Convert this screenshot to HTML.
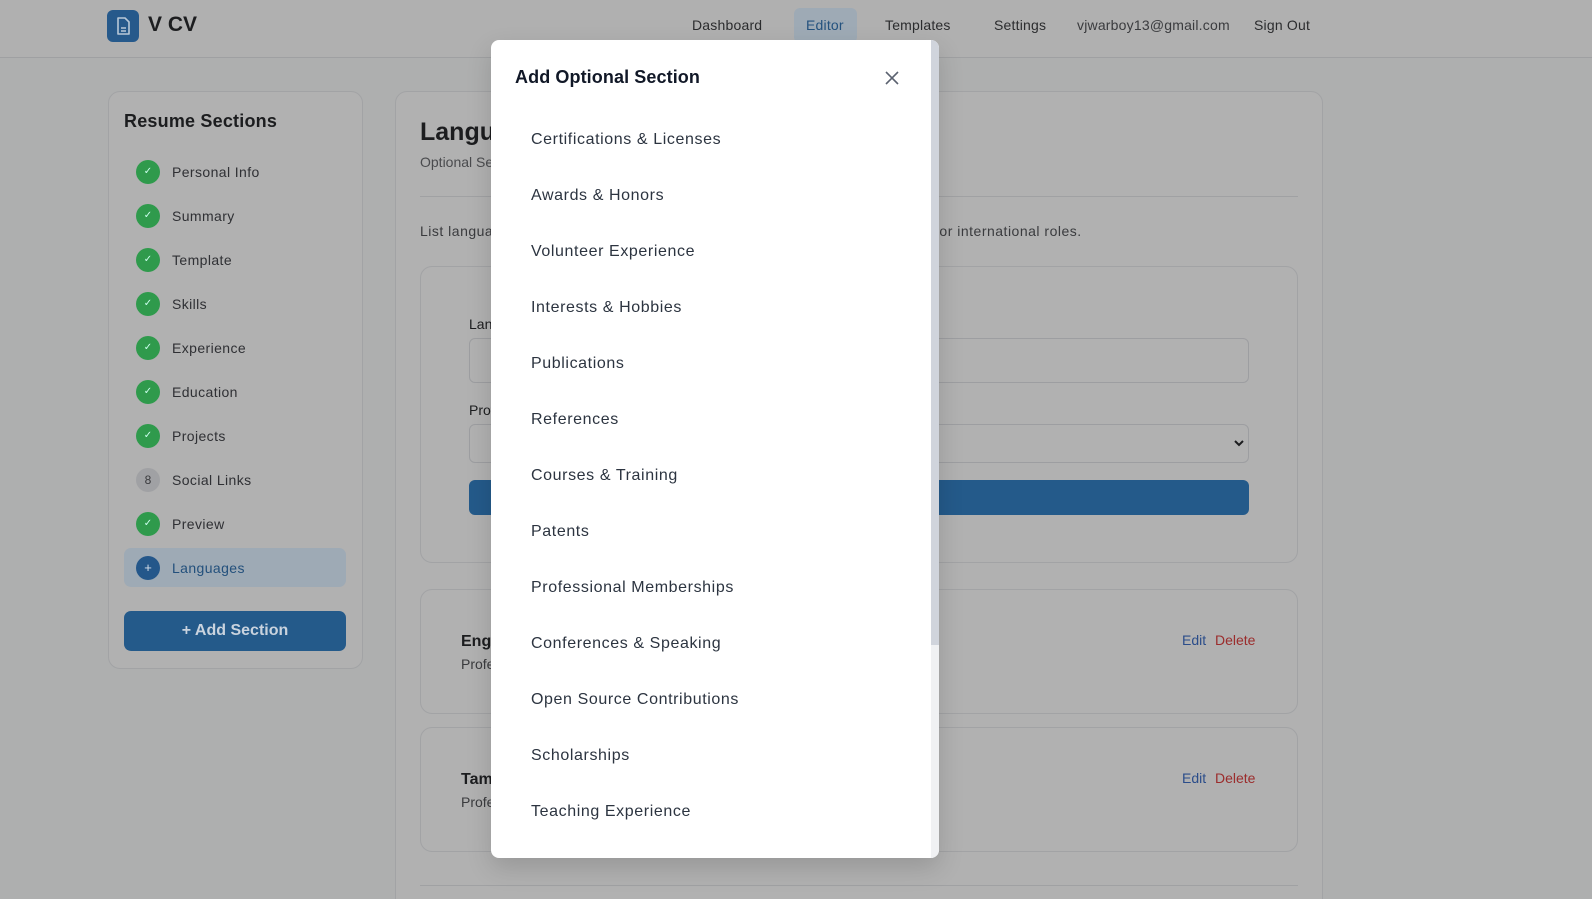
<!DOCTYPE html>
<html style="overflow:hidden;width:1592px;height:899px"><head><meta charset="utf-8"><style>
*{box-sizing:border-box;margin:0;padding:0}
body{width:1592px;height:899px;overflow:hidden;background:#aeafaf;font-family:"Liberation Sans",sans-serif;position:relative;color:#1c1d1f}
.a{position:absolute}
.hdr{left:0;top:0;width:1592px;height:58px;border-bottom:1px solid #9fa0a2;background:#b0b0b0}
.logo{left:107px;top:10px;width:32px;height:32px;border-radius:6px;background:#26598b}
.nav{top:17px;font-size:14px;color:#2b2c2e;letter-spacing:.2px}
.card{background:#b1b1b1;border:1px solid #a2a3a5;border-radius:12px}
.it{left:136px;font-size:14px;color:#2f3034;letter-spacing:.4px}
.dot{left:136px;width:24px;height:24px;border-radius:50%;background:#2f9a4c;color:#cfe;font-size:10px;text-align:center;line-height:24px}
.mi{left:531px;font-size:16px;color:#2c3440;letter-spacing:.6px}
</style></head><body>
<div class="a hdr"></div>
<div class="a logo"><svg width="32" height="32" viewBox="0 0 32 32"><path d="M11 8h7l4 4v12h-11z" fill="none" stroke="#b8c8d8" stroke-width="1.6" stroke-linejoin="round"/><path d="M14 18h5M14 21h5" stroke="#b8c8d8" stroke-width="1.5"/></svg></div>
<div class="a" style="left:148px;top:13px;font-size:21px;font-weight:bold">V CV</div>
<div class="a nav" style="left:692px">Dashboard</div>
<div class="a" style="left:794px;top:8px;width:63px;height:35px;border-radius:6px;background:#9eaab5"></div>
<div class="a nav" style="left:806px;color:#24527e">Editor</div>
<div class="a nav" style="left:885px">Templates</div>
<div class="a nav" style="left:994px">Settings</div>
<div class="a nav" style="left:1077px;color:#3a3b3e">vjwarboy13@gmail.com</div>
<div class="a nav" style="left:1254px">Sign Out</div>

<div class="a card" style="left:108px;top:91px;width:255px;height:578px"></div>
<div class="a" style="left:124px;top:111px;font-size:18px;font-weight:bold;letter-spacing:.2px">Resume Sections</div>
<div class="a" style="left:124px;top:548px;width:222px;height:39px;border-radius:7px;background:#9eaab5"></div>
<div class="a dot" style="top:160px">✓</div><div class="a it" style="left:172px;top:164px">Personal Info</div>
<div class="a dot" style="top:204px">✓</div><div class="a it" style="left:172px;top:208px">Summary</div>
<div class="a dot" style="top:248px">✓</div><div class="a it" style="left:172px;top:252px">Template</div>
<div class="a dot" style="top:292px">✓</div><div class="a it" style="left:172px;top:296px">Skills</div>
<div class="a dot" style="top:336px">✓</div><div class="a it" style="left:172px;top:340px">Experience</div>
<div class="a dot" style="top:380px">✓</div><div class="a it" style="left:172px;top:384px">Education</div>
<div class="a dot" style="top:424px">✓</div><div class="a it" style="left:172px;top:428px">Projects</div>
<div class="a dot" style="top:468px;background:#a0a1a4;color:#3a3b3e;font-size:12px">8</div><div class="a it" style="left:172px;top:472px">Social Links</div>
<div class="a dot" style="top:512px">✓</div><div class="a it" style="left:172px;top:516px">Preview</div>
<div class="a dot" style="top:556px;background:#24578a;color:#d8e0ea;font-size:13px">+</div><div class="a it" style="left:172px;top:560px;color:#23507c">Languages</div>
<div class="a" style="left:124px;top:611px;width:222px;height:40px;border-radius:7px;background:#245a8a;color:#c9d3de;font-size:16px;font-weight:bold;text-align:center;line-height:40px">+ Add Section</div>

<div class="a card" style="left:395px;top:91px;width:928px;height:830px"></div>
<div class="a" style="left:420px;top:118px;font-size:25px;font-weight:bold">Languages</div>
<div class="a" style="left:420px;top:154px;font-size:14px;color:#4a4b4e">Optional Section</div>
<div class="a" style="left:420px;top:196px;width:878px;height:1px;background:#a0a1a3"></div>
<div class="a" style="left:420px;top:223px;font-size:14px;color:#3a3b3e;letter-spacing:.5px;white-space:nowrap">List languages you speak and your proficiency level. This section is valuable for international roles.</div>
<div class="a card" style="left:420px;top:266px;width:878px;height:297px"></div>
<div class="a" style="left:469px;top:316px;font-size:14px">Language</div>
<div class="a" style="left:469px;top:338px;width:780px;height:45px;border:1px solid #9d9ea1;border-radius:6px"></div>
<div class="a" style="left:469px;top:402px;font-size:14px">Proficiency</div>
<div class="a" style="left:469px;top:424px;width:780px;height:39px;border:1px solid #9d9ea1;border-radius:6px"></div>
<svg class="a" style="left:1234px;top:439px" width="10" height="8" viewBox="0 0 10 8"><path d="M1 2l4 4 4-4" fill="none" stroke="#1c1d1f" stroke-width="2"/></svg>
<div class="a" style="left:469px;top:480px;width:780px;height:35px;border-radius:6px;background:#245a8a"></div>
<div class="a card" style="left:420px;top:589px;width:878px;height:125px"></div>
<div class="a" style="left:461px;top:633px;font-size:16px;font-weight:bold">English</div>
<div class="a" style="left:461px;top:656px;font-size:14px;color:#3a3b3e">Professional</div>
<div class="a" style="left:1182px;top:632px;font-size:14px;color:#2b4d8a">Edit</div>
<div class="a" style="left:1215px;top:632px;font-size:14px;color:#9b2c2c">Delete</div>
<div class="a card" style="left:420px;top:727px;width:878px;height:125px"></div>
<div class="a" style="left:461px;top:771px;font-size:16px;font-weight:bold">Tamil</div>
<div class="a" style="left:461px;top:794px;font-size:14px;color:#3a3b3e">Professional</div>
<div class="a" style="left:1182px;top:770px;font-size:14px;color:#2b4d8a">Edit</div>
<div class="a" style="left:1215px;top:770px;font-size:14px;color:#9b2c2c">Delete</div>
<div class="a" style="left:420px;top:885px;width:878px;height:1px;background:#a0a1a3"></div>

<div class="a" style="left:491px;top:40px;width:448px;height:818px;background:#fff;border-radius:8px;overflow:hidden;box-shadow:0 10px 25px rgba(0,0,0,.15)">
<div class="a" style="right:0;top:0;width:8px;height:818px;background:#f0f1f3"></div>
<div class="a" style="right:0;top:0;width:8px;height:605px;background:#d0d4dc"></div>
</div>
<div class="a" style="left:515px;top:67px;font-size:18px;font-weight:bold;color:#111827;letter-spacing:.1px">Add Optional Section</div>
<svg class="a" style="left:885px;top:71px" width="14" height="14" viewBox="0 0 14 14"><path d="M1 1L13 13M13 1L1 13" stroke="#5b6270" stroke-width="1.6"/></svg>
<div class="a mi" style="top:131px">Certifications &amp; Licenses</div>
<div class="a mi" style="top:187px">Awards &amp; Honors</div>
<div class="a mi" style="top:243px">Volunteer Experience</div>
<div class="a mi" style="top:299px">Interests &amp; Hobbies</div>
<div class="a mi" style="top:355px">Publications</div>
<div class="a mi" style="top:411px">References</div>
<div class="a mi" style="top:467px">Courses &amp; Training</div>
<div class="a mi" style="top:523px">Patents</div>
<div class="a mi" style="top:579px">Professional Memberships</div>
<div class="a mi" style="top:635px">Conferences &amp; Speaking</div>
<div class="a mi" style="top:691px">Open Source Contributions</div>
<div class="a mi" style="top:747px">Scholarships</div>
<div class="a mi" style="top:803px">Teaching Experience</div>
</body></html>
